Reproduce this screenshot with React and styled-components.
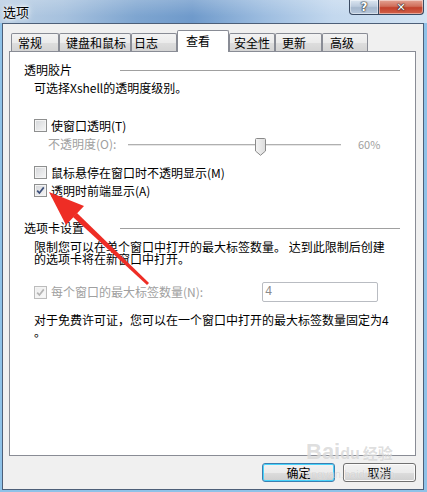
import styled, { createGlobalStyle } from "styled-components"

const GlobalStyle = createGlobalStyle`
  html, body { margin: 0; padding: 0; }
  body {
    width: 427px;
    height: 492px;
    overflow: hidden;
    font-family: "Noto Sans CJK SC", "Noto Sans", sans-serif;
    font-size: 12px;
    color: #000;
  }
  * { box-sizing: border-box; }
`

const tabs = [
    { label: "常规", w: 48, pad: 6 },
    { label: "键盘和鼠标", w: 72, pad: 6 },
    { label: "日志", w: 46, pad: 2 },
    { label: "查看", w: 52, pad: 8, active: true },
    { label: "安全性", w: 46, pad: 4 },
    { label: "更新", w: 47, pad: 6 },
    { label: "高级", w: 46, pad: 7 },
]

function CheckBox({ checked, disabled }) {
    return <Box $disabled={disabled}>
        {checked && <svg width="9" height="9" viewBox="0 0 9 9">
            <path d="M1.2 4.6 L3.4 7 L7.8 1.4" fill="none" stroke={disabled ? "#b4b4b4" : "#3d4f7a"} strokeWidth="1.7" />
        </svg>}
    </Box>
}

export default function App() {
    return <Window>
        <GlobalStyle />
        <TitleBar>
            <Title>选项</Title>
            <Caption>
                <CapButton $w={30}>?</CapButton>
                <CapButton $w={46} $close>✕</CapButton>
            </Caption>
        </TitleBar>
        <Client>
            <TabStrip>
                {tabs.map(t => <Tab key={t.label} $w={t.w} $pad={t.pad} $active={t.active}>{t.label}</Tab>)}
            </TabStrip>
            <Panel>
                <GroupHeader>
                    <GroupLabel>透明胶片</GroupLabel>
                    <GroupLine />
                </GroupHeader>
                <Body>
                    <Text $top={6}>可选择Xshell的透明度级别。</Text>
                    <CheckRow $top={25}>
                        <CheckBox />
                        <span>使窗口透明(T)</span>
                    </CheckRow>
                    <SliderRow>
                        <SliderLabel>不透明度(O):</SliderLabel>
                        <Track>
                            <Thumb>
                                <svg width="11" height="18" viewBox="0 0 11 18">
                                    <defs>
                                        <linearGradient id="tg" x1="0" x2="1">
                                            <stop offset="0" stopColor="#f4f4f4" />
                                            <stop offset="1" stopColor="#dcdcdc" />
                                        </linearGradient>
                                    </defs>
                                    <path d="M0.5 1.5 Q0.5 0.5 1.5 0.5 L9.5 0.5 Q10.5 0.5 10.5 1.5 L10.5 13 L5.5 17.3 L0.5 13 Z" fill="url(#tg)" stroke="#8a8a8a" />
                                </svg>
                            </Thumb>
                        </Track>
                        <Percent>60%</Percent>
                    </SliderRow>
                    <CheckRow $top={13}>
                        <CheckBox />
                        <span>鼠标悬停在窗口时不透明显示(M)</span>
                    </CheckRow>
                    <CheckRow $top={5}>
                        <CheckBox checked />
                        <span>透明时前端显示(A)</span>
                    </CheckRow>
                </Body>
                <GroupHeader $top={25}>
                    <GroupLabel>选项卡设置</GroupLabel>
                    <GroupLine />
                </GroupHeader>
                <Body>
                    <Text $top={7}>限制您可以在单个窗口中打开的最大标签数量。 达到此限制后创建<br />的选项卡将在新窗口中打开。</Text>
                    <InputRow>
                        <CheckBox checked disabled />
                        <InputLabel>每个窗口的最大标签数量(N):</InputLabel>
                        <NumberInput>4</NumberInput>
                    </InputRow>
                    <Text $top={12}>对于免费许可证，您可以在一个窗口中打开的最大标签数量固定为4<br />。</Text>
                </Body>
            </Panel>
            <ButtonRow>
                <Button $default>确定</Button>
                <Button>取消</Button>
            </ButtonRow>
        </Client>

        <Watermark>
            <Bai>Bai<Paw>du</Paw><Jy>经验</Jy></Bai>
            <Site>jingyan.baidu.com</Site>
        </Watermark>

        <Arrow width="427" height="492" viewBox="0 0 427 492">
            <polygon points="49,192 84,206 66,225" fill="#ee2d25" />
            <polygon points="73,217 77,213 149,283 147,285" fill="#ee2d25" />
        </Arrow>
    </Window>
}

const Window = styled.div`
    position: relative;
    width: 427px;
    height: 492px;
    display: flex;
    flex-direction: column;
    overflow: hidden;
    background: #8fc2e8;
`

const TitleBar = styled.div`
    height: 23px;
    flex: none;
    display: flex;
    justify-content: space-between;
    align-items: flex-start;
    background:
        linear-gradient(180deg, rgba(255,255,255,0.2), rgba(255,255,255,0) 70%),
        linear-gradient(90deg, #b9cee3 0%, #a6c1de 15%, #7ea5d0 32%, #6f9acb 45%, #9dbde0 62%, #c3d8ee 78%, #d2e3f3 100%);
`

const Title = styled.div`
    padding: 3px 0 0 3px;
    font-size: 13px;
    line-height: 17px;
    color: #000;
    text-shadow: 0 0 4px #fff, 0 0 8px #fff, 0 0 2px #fff;
`

const Caption = styled.div`
    display: flex;
    margin-right: 3px;
`

const CapButton = styled.div`
    width: ${p => p.$w}px;
    height: 15px;
    margin-left: -1px;
    border: 1px solid #3a4a62;
    border-top: none;
    border-radius: ${p => p.$close ? "0 0 4px 0" : "0 0 0 4px"};
    background: ${p => p.$close
        ? "linear-gradient(180deg, #e4a394 0%, #d06f5b 45%, #c2412c 55%, #d3624a 100%)"
        : "linear-gradient(180deg, #dce6f1 0%, #bccbdd 45%, #a5b7cd 55%, #b7c8dc 100%)"};
    box-shadow: inset 0 0 0 1px rgba(255,255,255,0.45);
    display: flex;
    justify-content: center;
    align-items: center;
    color: #fff;
    font-family: "DejaVu Sans", sans-serif;
    font-weight: bold;
    font-size: ${p => p.$close ? 11 : 12}px;
    line-height: 1;
    text-shadow: 0 0 1px #222, 0 0 1px #222, 0 0 2px #333;
`

const Client = styled.div`
    flex: 1;
    margin: 0 3px 2px 2px;
    border: 1px solid #4d5f78;
    background: #f0f0f0;
    display: flex;
    flex-direction: column;
    padding: 6px 7px 7px 6px;
`

const TabStrip = styled.div`
    height: 22px;
    flex: none;
    display: flex;
    align-items: flex-end;
    padding-left: 2px;
    margin-bottom: -1px;
    position: relative;
    z-index: 1;
`

const Tab = styled.div`
    width: ${p => p.$w}px;
    height: ${p => p.$active ? 22 : 18}px;
    margin-bottom: ${p => p.$active ? 0 : 1}px;
    padding-left: ${p => p.$pad}px;
    border: 1px solid #898c95;
    border-bottom: none;
    border-radius: 2px 2px 0 0;
    background: ${p => p.$active
        ? "#fff"
        : "linear-gradient(180deg, #f3f3f3 0%, #ebebeb 50%, #dedede 51%, #d4d4d4 100%)"};
    line-height: ${p => p.$active ? 20 : 18}px;
    white-space: nowrap;
`

const Panel = styled.div`
    flex: 1;
    background: #fff;
    border: 1px solid #898c95;
    padding: 12px 15px 0 14px;
    display: flex;
    flex-direction: column;
`

const GroupHeader = styled.div`
    display: flex;
    align-items: center;
    height: 12px;
    margin-top: ${p => p.$top || 0}px;
`

const GroupLabel = styled.div`
    width: 96px;
    line-height: 12px;
    white-space: nowrap;
`

const GroupLine = styled.div`
    flex: 1;
    height: 1px;
    background: #a0a0a0;
`

const Body = styled.div`
    display: flex;
    flex-direction: column;
    padding-left: 10px;
`

const Text = styled.div`
    margin-top: ${p => p.$top}px;
    line-height: 12px;
    white-space: nowrap;
`

const CheckRow = styled.div`
    margin-top: ${p => p.$top}px;
    height: 13px;
    display: flex;
    align-items: center;
    gap: 4px;
    line-height: 13px;
    white-space: nowrap;
`

const Box = styled.span`
    flex: none;
    width: 13px;
    height: 13px;
    border: 1px solid ${p => p.$disabled ? "#bcbcbc" : "#8e8f8f"};
    background: ${p => p.$disabled
        ? "linear-gradient(135deg, #ececec, #fafafa)"
        : "linear-gradient(135deg, #d4d6d9, #f7f7f7)"};
    box-shadow: inset 0 0 0 1px #f4f4f4;
    display: flex;
    align-items: center;
    justify-content: center;
`

const SliderRow = styled.div`
    margin-top: 3px;
    height: 18px;
    display: flex;
    align-items: center;
    padding-left: 14px;
    white-space: nowrap;
`

const SliderLabel = styled.span`
    width: 80px;
    color: #a0a0a0;
    line-height: 12px;
`

const Track = styled.div`
    position: relative;
    width: 213px;
    height: 2px;
    border-top: 1px solid #b0b0b0;
    border-bottom: 1px solid #e6e6e6;
    margin-top: 2px;
`

const Thumb = styled.div`
    position: absolute;
    left: 127px;
    top: -7px;
    display: flex;
`

const Percent = styled.span`
    margin-left: 17px;
    color: #a0a0a0;
    font-size: 11px;
    line-height: 12px;
`

const InputRow = styled.div`
    margin-top: 17px;
    height: 20px;
    display: flex;
    align-items: center;
    gap: 4px;
`

const InputLabel = styled.span`
    width: 207px;
    color: #a0a0a0;
    line-height: 12px;
    white-space: nowrap;
`

const NumberInput = styled.div`
    width: 116px;
    height: 20px;
    border: 1px solid #b9bcc2;
    border-radius: 2px;
    padding-left: 2px;
    line-height: 18px;
    color: #8a8a8a;
    font-family: "Liberation Mono", monospace;
    font-size: 12px;
`

const ButtonRow = styled.div`
    flex: none;
    margin-top: 7px;
    height: 19px;
    display: flex;
    justify-content: flex-end;
    gap: 8px;
`

const Button = styled.div`
    width: 73px;
    height: 19px;
    border: 1px solid ${p => p.$default ? "#3c7fb1" : "#707070"};
    border-radius: 3px;
    background: linear-gradient(180deg, #f2f2f2 0%, #ebebeb 50%, #dddddd 51%, #cfcfcf 100%);
    box-shadow: ${p => p.$default ? "inset 0 0 0 1px #48d3fb" : "inset 0 0 0 1px #fbfbfb"};
    display: flex;
    align-items: center;
    justify-content: center;
    line-height: 12px;
`

const Watermark = styled.div`
    position: absolute;
    left: 306px;
    top: 440px;
    pointer-events: none;
    color: rgba(170, 170, 170, 0.4);
    text-shadow: 0 0 1px rgba(255,255,255,0.8);
`

const Bai = styled.div`
    font-family: "Liberation Sans", sans-serif;
    font-size: 22px;
    font-weight: bold;
    line-height: 24px;
    display: flex;
    align-items: baseline;
`

const Paw = styled.span`
    font-size: 16px;
`

const Jy = styled.span`
    font-family: "Noto Sans CJK SC", sans-serif;
    font-size: 15px;
    margin-left: 3px;
`

const Site = styled.div`
    font-family: "Liberation Sans", sans-serif;
    font-size: 11px;
    line-height: 12px;
    margin-top: 2px;
    color: rgba(150, 150, 150, 0.3);
`

const Arrow = styled.svg`
    position: absolute;
    left: 0;
    top: 0;
    pointer-events: none;
`
